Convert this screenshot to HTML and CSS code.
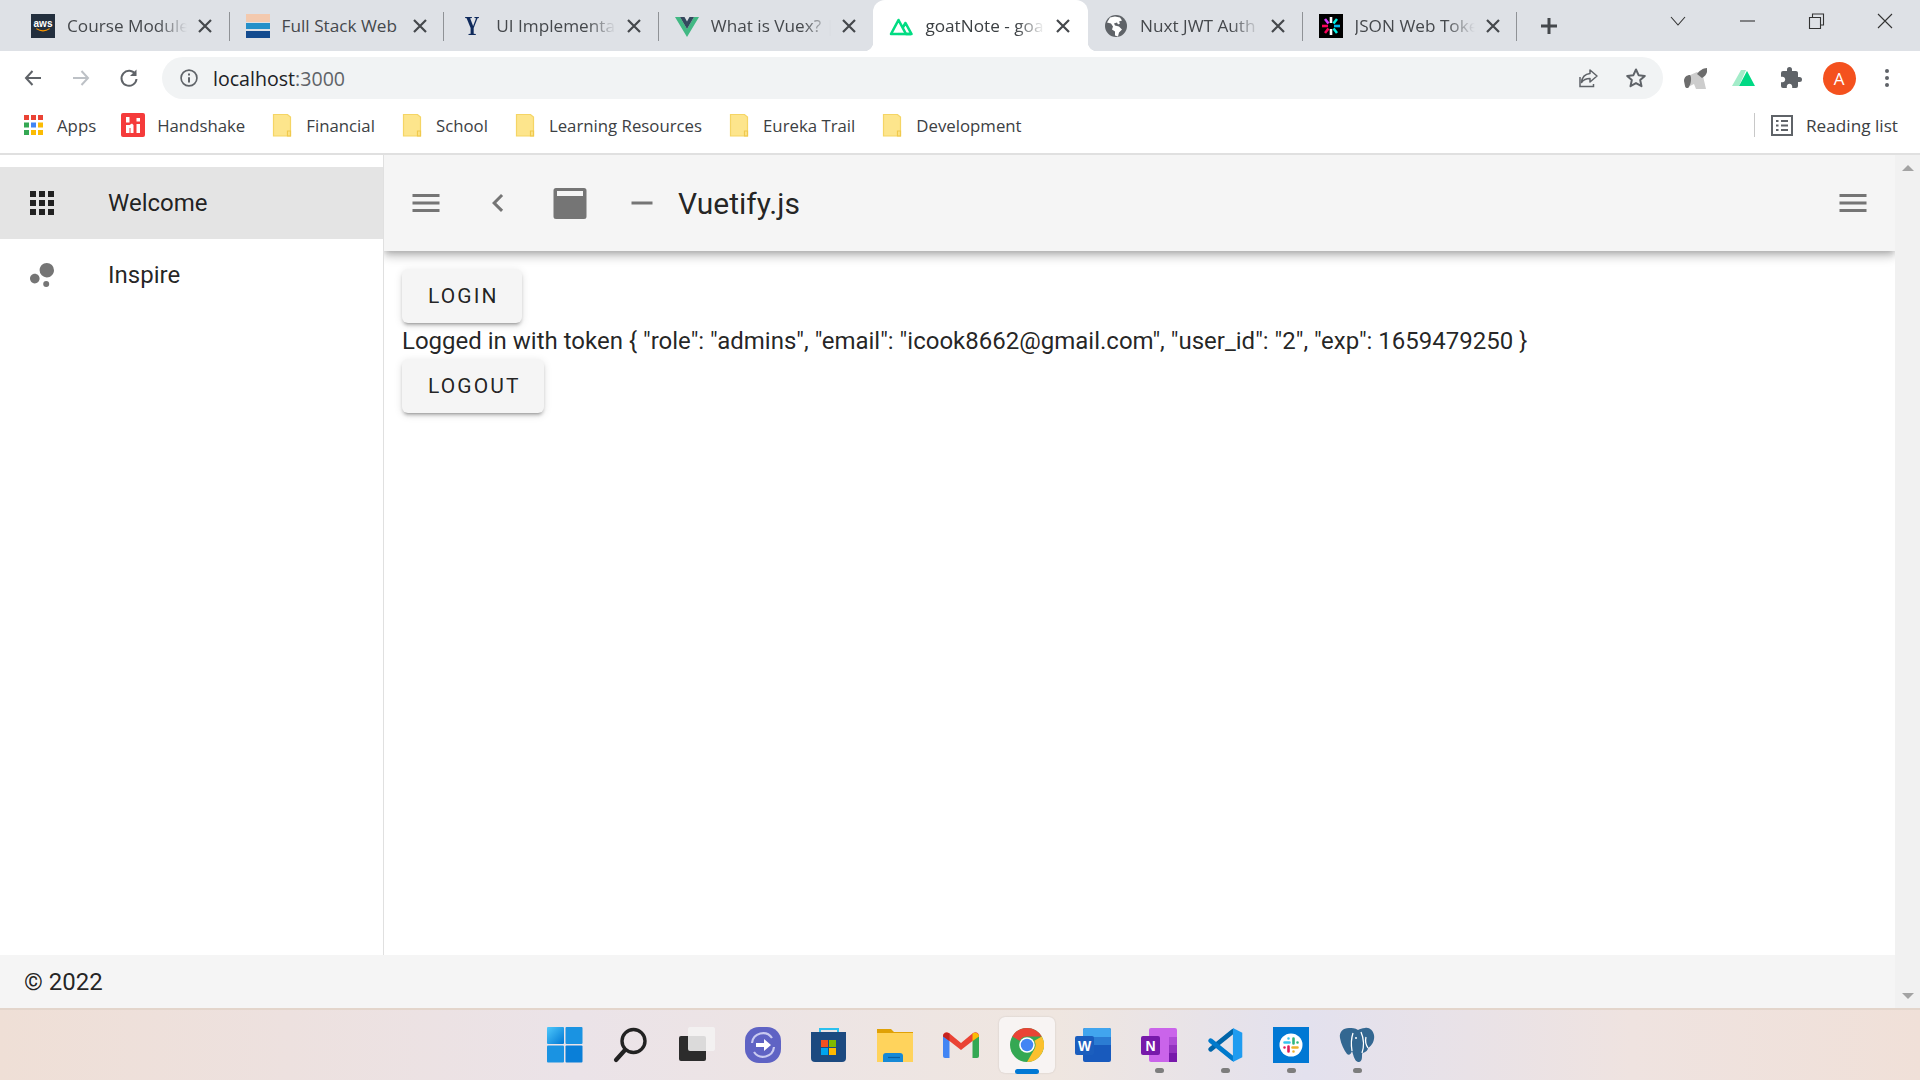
FILE: index.html
```html
<!DOCTYPE html>
<html lang="en">
<head>
  <meta charset="UTF-8">
  <title>goatNote</title>
  <link rel="stylesheet" href="styles.css">
</head>
<body>
  <!-- Tab strip -->
  <div class="tabstrip">
    <div class="tab">
      <span class="favicon favicon-aws"><span class="aws-word">aws</span><svg viewBox="0 0 24 6" width="16" height="4"><path d="M2 1c6 4 14 4 20 0" fill="none" stroke="#f90" stroke-width="1.6"/></svg></span>
      <span class="tab-title">Course Modules</span>
      <svg class="tab-close" viewBox="0 0 18 18"><path d="M3 3l12 12M15 3L3 15"/></svg>
    </div>
    <div class="tab">
      <span class="favicon favicon-stripes"><i class="stripe-a"></i><i class="stripe-b"></i><i class="stripe-c"></i></span>
      <span class="tab-title tab-title-short">Full Stack Web</span>
      <svg class="tab-close" viewBox="0 0 18 18"><path d="M3 3l12 12M15 3L3 15"/></svg>
    </div>
    <div class="tab">
      <span class="favicon favicon-yale"><span class="yale-letter">Y</span></span>
      <span class="tab-title">UI Implementation</span>
      <svg class="tab-close" viewBox="0 0 18 18"><path d="M3 3l12 12M15 3L3 15"/></svg>
    </div>
    <div class="tab tab-before-active">
      <svg class="favicon" viewBox="0 0 24 24"><path d="M0 3h5l7 12 7-12h5L12 23z" fill="#41b883"/><path d="M5 3h4.500l2.500 4.500L14.500 3H19l-7 12z" fill="#34495e"/></svg>
      <span class="tab-title">What is Vuex? | Vuex</span>
      <svg class="tab-close" viewBox="0 0 18 18"><path d="M3 3l12 12M15 3L3 15"/></svg>
    </div>
    <div class="tab tab-active">
      <svg class="favicon" viewBox="0 0 24 24"><path d="M9 20H2L9.500 6l7.500 14h5.500L16.500 9l-3 5" fill="none" stroke="#00dc82" stroke-width="2.600" stroke-linejoin="round"/><path d="M9 20h13" stroke="#00dc82" stroke-width="2.600"/></svg>
      <span class="tab-title">goatNote - goatNote</span>
      <svg class="tab-close" viewBox="0 0 18 18"><path d="M3 3l12 12M15 3L3 15"/></svg>
    </div>
    <div class="tab">
      <svg class="favicon" viewBox="0 0 24 24"><circle cx="12" cy="12" r="11" fill="#5f6368"/><path d="M11 2.500l-5 1-3 5 4 1 2 3-1 3 3 2v4l3 1 1-4 3-3-3-3-4-1-1-2 3-1 1 2 2-1-1-2 3-1-2-3z" fill="#fff"/></svg>
      <span class="tab-title">Nuxt JWT Auth</span>
      <svg class="tab-close" viewBox="0 0 18 18"><path d="M3 3l12 12M15 3L3 15"/></svg>
    </div>
    <div class="tab">
      <svg class="favicon" viewBox="0 0 24 24"><rect width="24" height="24" fill="#000"/><g stroke-width="2.600" fill="none"><path d="M12 3v6M12 15v6" stroke="#fff"/><path d="M6 5l3.500 4.500" stroke="#d63aff"/><path d="M18 5l-3.500 4.500" stroke="#00f2e6"/><path d="M3 12h6" stroke="#fb015b"/><path d="M15 12h6" stroke="#00b9f1"/><path d="M6 19l3.500-4.500" stroke="#fb015b"/><path d="M18 19l-3.500-4.500" stroke="#00f2e6"/></g></svg>
      <span class="tab-title">JSON Web Tokens</span>
      <svg class="tab-close" viewBox="0 0 18 18"><path d="M3 3l12 12M15 3L3 15"/></svg>
    </div>
    <svg class="new-tab" viewBox="0 0 24 24"><path d="M12 4v16M4 12h16"/></svg>
    <div class="window-controls">
      <svg class="window-btn tab-list" viewBox="0 0 18 18"><path d="M2 5l7 8 7-8"/></svg>
      <svg class="window-btn" viewBox="0 0 18 18"><path d="M2 9h15"/></svg>
      <svg class="window-btn" viewBox="0 0 18 18"><path d="M2.500 5.500h11v11h-11zM5.500 5V2h11v11h-3"/></svg>
      <svg class="window-btn" viewBox="0 0 18 18"><path d="M2 2l14 14M16 2L2 16"/></svg>
    </div>
  </div>

  <!-- Address bar -->
  <div class="toolbar">
    <svg class="tool-icon" viewBox="0 0 24 24"><path d="M20 12H5M11.500 5L5 12l6.500 7" fill="none" stroke="#5f6368" stroke-width="2"/></svg>
    <svg class="tool-icon" viewBox="0 0 24 24"><path d="M4 12h15M12.500 5l6.500 7-6.500 7" fill="none" stroke="#bdc1c6" stroke-width="2"/></svg>
    <svg class="tool-icon" viewBox="0 0 24 24"><path d="M18.500 8.500A7.500 7.500 0 1 0 19.500 13" fill="none" stroke="#5f6368" stroke-width="2"/><path d="M19.500 3.500v6.500H13z" fill="#5f6368"/></svg>
    <div class="omnibox">
      <svg class="omni-info" viewBox="0 0 24 24"><circle cx="12" cy="12" r="9.500" fill="none" stroke="#5f6368" stroke-width="2"/><path d="M12 11v6.500M12 6.500v2.500" stroke="#5f6368" stroke-width="2.400"/></svg>
      <span class="url">localhost<span class="url-port">:3000</span></span>
      <svg class="tool-icon omni-share" viewBox="0 0 24 24"><path d="M4 11v9.500h13.500V18" fill="none" stroke="#5f6368" stroke-width="1.500"/><path d="M14 4l7 6-7 6v-3.500c-4 0-6.500 1-8.500 4 .5-5 3.500-8.500 8.500-9z" fill="none" stroke="#5f6368" stroke-width="1.500" stroke-linejoin="round"/></svg>
      <svg class="tool-icon" viewBox="0 0 24 24"><path d="M12 3.500l2.600 5.700 6.200.7-4.600 4.200 1.300 6.100-5.500-3.100-5.500 3.100 1.300-6.100-4.600-4.200 6.200-.7z" fill="none" stroke="#5f6368" stroke-width="2" stroke-linejoin="round"/></svg>
    </div>
    <svg class="tool-icon" viewBox="0 0 24 24"><path d="M5 10l9-4 6 4 3 13H13l-2-5-4 2z" fill="#cdcdcd"/><path d="M1 15c0-4 3-6 6-6 2 2 1 9-1 12-1 2-4 1-4-1z" fill="#6d6d6d"/><path d="M14 8c2-3 6-6 10-6 1 4-1 8-5 10z" fill="#6d6d6d"/></svg>
    <svg class="tool-icon" viewBox="0 0 24 24"><path d="M1 20L10 4h5L8 20z" fill="#a3ecc9"/><path d="M8 20l8-15 8 15z" fill="#00d984"/></svg>
    <svg class="tool-icon" viewBox="0 0 24 24"><path d="M20.500 11H19V7C19 5.890 18.100 5 17 5H13V3.500A2.500 2.500 0 0 0 10.500 1A2.500 2.500 0 0 0 8 3.500V5H4A2 2 0 0 0 2 7V10.800H3.500C5 10.800 6.200 12 6.200 13.500C6.200 15 5 16.200 3.500 16.200H2V20A2 2 0 0 0 4 22H7.800V20.500C7.800 19 9 17.800 10.500 17.800C12 17.800 13.200 19 13.200 20.500V22H17A2 2 0 0 0 19 20V16H20.500A2.500 2.500 0 0 0 23 13.500A2.500 2.500 0 0 0 20.500 11Z" fill="#5f6368"/></svg>
    <div class="tool-slot"><span class="avatar">A</span></div>
    <svg class="tool-icon" viewBox="0 0 24 24"><circle cx="12" cy="5" r="2" fill="#5f6368"/><circle cx="12" cy="12" r="2" fill="#5f6368"/><circle cx="12" cy="19" r="2" fill="#5f6368"/></svg>
  </div>

  <!-- Bookmarks -->
  <div class="bookmarks">
    <div class="bookmark">
      <svg class="bookmark-icon" viewBox="0 0 24 24">
        <g fill="#ea4335"><rect x="3" y="2" width="5" height="5"/><rect x="10" y="2" width="5" height="5"/><rect x="17" y="2" width="5" height="5"/></g>
        <rect x="3" y="9.500" width="5" height="5" fill="#34a853"/><rect x="10" y="9.500" width="5" height="5" fill="#4285f4"/><rect x="17" y="9.500" width="5" height="5" fill="#fbbc04"/>
        <rect x="3" y="17" width="5" height="5" fill="#34a853"/><rect x="10" y="17" width="5" height="5" fill="#fbbc04"/><rect x="17" y="17" width="5" height="5" fill="#fbbc04"/>
      </svg>
      <span>Apps</span>
    </div>
    <div class="bookmark">
      <svg class="bookmark-icon" viewBox="0 0 24 24"><rect width="24" height="24" rx="2" fill="#f53b3b"/><path d="M5 4h3.500v5.500H5zM5 12h3.500v8H5zM8.500 12l2.500-1.500 1.500 1.500v8H9.500v-5H8.500zM15.500 11h3.500v9h-3.500zM15.500 5h3.500v3.500h-3.500z" fill="#fff"/></svg>
      <span>Handshake</span>
    </div>
    <div class="bookmark">
      <svg class="bookmark-icon" viewBox="0 0 24 24"><use href="#folder"/></svg>
      <span>Financial</span>
    </div>
    <div class="bookmark">
      <svg class="bookmark-icon" viewBox="0 0 24 24"><use href="#folder"/></svg>
      <span>School</span>
    </div>
    <div class="bookmark">
      <svg class="bookmark-icon" viewBox="0 0 24 24"><use href="#folder"/></svg>
      <span>Learning Resources</span>
    </div>
    <div class="bookmark">
      <svg class="bookmark-icon" viewBox="0 0 24 24"><use href="#folder"/></svg>
      <span>Eureka Trail</span>
    </div>
    <div class="bookmark">
      <svg class="bookmark-icon" viewBox="0 0 24 24"><use href="#folder"/></svg>
      <span>Development</span>
    </div>
    <div class="reading-list">
      <svg class="bookmark-icon" viewBox="0 0 24 24"><path d="M2 3h20v19H2z" fill="none" stroke="#5f6368" stroke-width="2"/><path d="M6 8h2.500M11 8h7M6 12.500h2.500M11 12.500h7M6 17h2.500M11 17h7" stroke="#5f6368" stroke-width="2"/></svg>
      <span>Reading list</span>
    </div>
  </div>

  <svg class="svg-defs" width="0" height="0"><symbol id="folder" viewBox="0 0 24 24"><path d="M3.500 1.500h14L20.500 4v19h-17z" fill="#fde58c" stroke="#f5d565" stroke-width="1.200"/><path d="M17.500 23v-5h3v5z" fill="none" stroke="#f0c94d" stroke-width="1.200"/></symbol></svg>

  <!-- Page -->
  <div class="viewport">
    <div class="page">
      <div class="app-body">
        <nav class="drawer">
          <div class="drawer-item drawer-item-active">
            <svg class="mdi mdi-dark" viewBox="0 0 24 24"><path d="M16 20H20V16H16M16 14H20V10H16M10 8H14V4H10M16 8H20V4H16M10 14H14V10H10M4 14H8V10H4M4 20H8V16H4M10 20H14V16H10M4 8H8V4H4V8Z"/></svg>
            <span>Welcome</span>
          </div>
          <div class="drawer-item">
            <svg class="mdi" viewBox="0 0 24 24"><path d="M7.200 11.200C8.970 11.200 10.400 12.630 10.400 14.400C10.400 16.170 8.970 17.600 7.200 17.600C5.430 17.600 4 16.170 4 14.400C4 12.630 5.430 11.200 7.200 11.200M14.800 16A2 2 0 0 1 16.800 18A2 2 0 0 1 14.800 20A2 2 0 0 1 12.800 18A2 2 0 0 1 14.800 16M15.200 4A4.800 4.800 0 0 1 20 8.800C20 11.450 17.850 13.600 15.200 13.600A4.800 4.800 0 0 1 10.400 8.800C10.400 6.150 12.550 4 15.200 4Z"/></svg>
            <span>Inspire</span>
          </div>
        </nav>
        <div class="content">
          <header class="app-bar">
            <svg class="mdi" viewBox="0 0 24 24"><path d="M3 6H21V8H3V6M3 11H21V13H3V11M3 16H21V18H3V16Z"/></svg>
            <svg class="mdi" viewBox="0 0 24 24"><path d="M15.410 16.580L10.830 12L15.410 7.410L14 6L8 12L14 18L15.410 16.580Z"/></svg>
            <svg class="mdi" viewBox="0 0 36 36"><path fill-rule="evenodd" d="M4 3h28a2.500 2.500 0 0 1 2.500 2.500v26a2.500 2.500 0 0 1-2.500 2.500H4a2.500 2.500 0 0 1-2.500-2.500v-26A2.500 2.500 0 0 1 4 3zM5 6v5h26V6z"/></svg>
            <svg class="mdi" viewBox="0 0 24 24"><path d="M19 13H5V11H19V13Z"/></svg>
            <span class="app-title">Vuetify.js</span>
            <svg class="mdi app-bar-end" viewBox="0 0 24 24"><path d="M3 6H21V8H3V6M3 11H21V13H3V11M3 16H21V18H3V16Z"/></svg>
          </header>
          <main class="main">
            <button class="btn">Login</button>
            <div class="token">Logged in with token { "role": "admins", "email": "icook8662@gmail.com", "user_id": "2", "exp": 1659479250 }</div>
            <button class="btn">Logout</button>
          </main>
        </div>
      </div>
      <footer class="footer">© 2022</footer>
    </div>
    <div class="scrollbar">
      <span class="scroll-up"></span>
      <span class="scroll-down"></span>
    </div>
  </div>

  <!-- Taskbar -->
  <div class="taskbar">
    <div class="task">
      <svg class="task-icon" viewBox="0 0 36 36"><defs><linearGradient id="win" x1="0" y1="0" x2="1" y2="1"><stop offset="0" stop-color="#4fc8fb"/><stop offset="1" stop-color="#0078d4"/></linearGradient></defs><rect x="0" y="0" width="17" height="17" rx="1" fill="url(#win)"/><rect x="18.500" y="0" width="17" height="17" rx="1" fill="#1a93e2"/><rect x="0" y="18.500" width="17" height="17" rx="1" fill="#1a93e2"/><rect x="18.500" y="18.500" width="17" height="17" rx="1" fill="#0a7fd8"/></svg>
    </div>
    <div class="task">
      <svg class="task-icon" viewBox="0 0 36 36"><circle cx="20.500" cy="14" r="11.500" fill="none" stroke="#222" stroke-width="3.400"/><path d="M12 23L3 33" stroke="#222" stroke-width="4.200" stroke-linecap="round"/></svg>
    </div>
    <div class="task">
      <svg class="task-icon" viewBox="0 0 36 36"><rect x="0" y="9" width="27" height="25" rx="2" fill="#2c2c2c"/><rect x="9" y="0" width="27" height="24" rx="2" fill="#f4f2f3" fill-opacity=".88"/></svg>
    </div>
    <div class="task">
      <svg class="task-icon" viewBox="0 0 36 36"><rect x="0" y="0" width="36" height="36" rx="14" fill="#5f63c4"/><path d="M7 16a11 11 0 0 1 20-5M29 20a11 11 0 0 1-20 5" fill="none" stroke="#c9caf0" stroke-width="2.200"/><path d="M11 16h8v-4l7 6-7 6v-4h-8z" fill="#fff"/></svg>
    </div>
    <div class="task">
      <svg class="task-icon" viewBox="0 0 36 36"><path d="M9 8V2h18v6" fill="none" stroke="#2bc0ee" stroke-width="2"/><path d="M0 5h35v26a4 4 0 0 1-4 4H4a4 4 0 0 1-4-4z" fill="#1c4a80"/><rect x="10" y="13" width="7" height="7" fill="#f25022"/><rect x="18" y="13" width="7" height="7" fill="#7fba00"/><rect x="10" y="21" width="7" height="7" fill="#00a4ef"/><rect x="18" y="21" width="7" height="7" fill="#ffb900"/></svg>
    </div>
    <div class="task">
      <svg class="task-icon" viewBox="0 0 36 36"><path d="M0 2h14l3 3h19v5H0z" fill="#e0a106"/><path d="M0 6h36v29H0z" fill="#ffd35c"/><path d="M6 35v-6a3 3 0 0 1 3-3h14a3 3 0 0 1 3 3v6z" fill="#1689d6"/><path d="M11 30.500h12" stroke="#0b5ea0" stroke-width="1.200"/></svg>
    </div>
    <div class="task">
      <svg class="task-icon" viewBox="0 0 36 26"><path d="M0 4h6.500v22H2a2 2 0 0 1-2-2z" fill="#4285f4"/><path d="M29.500 4H36v20a2 2 0 0 1-2 2h-4.500z" fill="#34a853"/><path d="M0 4c0-3 3-5 6-3l12 10L30 1c3-2 6 0 6 3l-6.500 5L18 18 6.500 9z" fill="#ea4335"/><path d="M29.500 9V1.500C32 0 36 1 36 4.500z" fill="#fbbc04"/><path d="M0 4.500C0 1 4 0 6.500 1.500V9z" fill="#c5221f"/></svg>
    </div>
    <div class="task">
      <div class="task-tile">
        <svg class="task-icon-chrome" viewBox="0 0 48 48"><circle cx="24" cy="24" r="24" fill="#34a853"/><path d="M24 0a24 24 0 0 1 20.800 12H24a12 12 0 0 0-10.400 6L3.200 12A24 24 0 0 1 24 0z" fill="#ea4335"/><path d="M44.800 12A24 24 0 0 1 24 48l10.400-18a12 12 0 0 0 0-12z" fill="#fbc02d"/><circle cx="24" cy="24" r="11" fill="#fff"/><circle cx="24" cy="24" r="8.800" fill="#4285f4"/></svg>
      </div>
      <i class="task-bar"></i>
    </div>
    <div class="task">
      <svg class="task-icon" viewBox="0 0 36 36"><rect x="8" y="1" width="28" height="34" rx="2" fill="#185abd"/><path d="M8 3a2 2 0 0 1 2-2h24a2 2 0 0 1 2 2v7H8z" fill="#41a5ee"/><rect x="8" y="10" width="28" height="8" fill="#2b7cd3"/><rect x="0" y="9" width="19" height="19" rx="2" fill="#1b5ebe"/><text class="office-letter" x="9.500" y="24">W</text></svg>
    </div>
    <div class="task">
      <svg class="task-icon" viewBox="0 0 36 36"><rect x="8" y="1" width="28" height="34" rx="2" fill="#ca64ea"/><rect x="28" y="10" width="8" height="8" fill="#ae4bd5"/><rect x="28" y="18" width="8" height="8" fill="#9332bf"/><rect x="28" y="26" width="8" height="9" fill="#7719aa"/><rect x="0" y="9" width="19" height="19" rx="2" fill="#7719aa"/><text class="office-letter" x="9.500" y="24">N</text></svg>
      <i class="task-dot"></i>
    </div>
    <div class="task">
      <svg class="task-icon" viewBox="0 0 100 100"><path d="M72 12L10 62" stroke="#0065a9" stroke-width="13" stroke-linecap="round"/><path d="M10 38l62 50" stroke="#007acc" stroke-width="13" stroke-linecap="round"/><path d="M72 3l26 13v68L72 97z" fill="#1f9cf0"/></svg>
      <i class="task-dot"></i>
    </div>
    <div class="task">
      <svg class="task-icon" viewBox="0 0 36 36"><rect width="36" height="36" fill="#0078d4"/><circle cx="18" cy="18" r="11.500" fill="#fff"/><g stroke-width="2.600" stroke-linecap="round"><path d="M11.500 15.500h5M15.500 11.500h.01" stroke="#36c5f0"/><path d="M20.500 11.500v5M24.500 15.500h.01" stroke="#2eb67d"/><path d="M19.500 20.500h5M20.500 24.500h.01" stroke="#ecb22e"/><path d="M15.500 19.500v5M11.500 20.500h.01" stroke="#e01e5a"/></g></svg>
      <i class="task-dot"></i>
    </div>
    <div class="task">
      <svg class="task-icon" viewBox="0 0 36 36"><path d="M10 1C4 1 0 5 1 11c1 6 4 12 7 16 2 2 4 0 5-3 1 2 2 10 6 11 3 0 4-2 4-6 0-2 0-3 1-3 3-1 5-3 5-5 4-2 7-8 6-13-1-5-5-8-9-7-3 0-5 1-7 2-3-2-6-2-9-2z" fill="#336791"/><path d="M13 24c-1-6-1-12 1-18M23 26c2-6 2-14-1-21M29 21c-2-3-3-7-2-11" fill="none" stroke="#fff" stroke-width="1.300"/><circle cx="17" cy="11" r="1" fill="#fff"/></svg>
      <i class="task-dot"></i>
    </div>
  </div>
</body>
</html>
```

FILE: styles.css
```css
body {
  margin: 0;
  height: 100vh;
  display: flex;
  flex-direction: column;
  overflow: hidden;
  font-family: "Open Sans", "Liberation Sans", sans-serif;
  background: #fff;
}
svg {
  flex: none;
  display: block;
}
.svg-defs {
  height: 0;
}

/* tab strip */
.tabstrip {
  height: 51px;
  flex: none;
  display: flex;
  padding-left: 15px;
  background: #dee1e6;
}
.tab {
  width: 214.6px;
  flex: none;
  display: flex;
  align-items: center;
  padding-left: 16px;
  box-sizing: border-box;
  position: relative;
}
.tab::after {
  content: '';
  width: 1px;
  height: 29px;
  margin-left: auto;
  margin-top: 2px;
  background: #8f9296;
}
.tab-active {
  background: #fff;
  border-radius: 12px 12px 0 0;
}
.tab-active::after,
.tab-before-active::after {
  background: transparent;
}
.tab-active::before {
  content: '';
  position: absolute;
  left: -9px;
  right: -9px;
  bottom: 0;
  height: 9px;
  background:
    radial-gradient(circle at 0 0, #dee1e6 9px, #fff 9.5px) left / 9px 9px no-repeat,
    radial-gradient(circle at 100% 0, #dee1e6 9px, #fff 9.5px) right / 9px 9px no-repeat;
}
.favicon {
  width: 24px;
  height: 24px;
  flex: none;
}
.favicon-aws {
  background: #232f3e;
  color: #fff;
  display: flex;
  flex-direction: column;
  align-items: center;
  justify-content: center;
}
.aws-word {
  font: bold 10px/9px "Liberation Sans", sans-serif;
}
.favicon-stripes {
  display: flex;
  flex-direction: column;
}
.favicon-stripes i {
  display: block;
}
.stripe-a {
  height: 8px;
  background: #f3c9ae;
}
.stripe-b {
  height: 6px;
  margin-top: 1px;
  background: #2590c9;
}
.stripe-c {
  height: 7px;
  margin-top: 2px;
  background: #134b8f;
}
.favicon-yale {
  font: bold 28px/24px "Liberation Serif", serif;
  color: #0f2a5c;
  text-align: center;
}
.yale-letter {
  display: inline-block;
  transform: scaleX(0.72);
}
.tab-title {
  width: 120px;
  margin-left: 12px;
  margin-right: 9px;
  flex: none;
  overflow: hidden;
  white-space: nowrap;
  font-size: 17.2px;
  color: #45484c;
  -webkit-mask-image: linear-gradient(90deg, #000 76%, transparent 100%);
  mask-image: linear-gradient(90deg, #000 76%, transparent 100%);
}
.tab-title-short {
  -webkit-mask-image: none;
  mask-image: none;
}
.tab-active .tab-title {
  color: #3c4043;
}
.tab-close {
  width: 18px;
  height: 18px;
  fill: none;
  stroke: #45484c;
  stroke-width: 2.2;
}
.new-tab {
  width: 24px;
  height: 24px;
  margin: 14px 0 0 20px;
  fill: none;
  stroke: #45484c;
  stroke-width: 3;
}
.window-controls {
  margin-left: auto;
  margin-top: 12px;
  padding-right: 26px;
  display: flex;
  gap: 51px;
  align-items: flex-start;
}
.window-btn {
  width: 18px;
  height: 18px;
  fill: none;
  stroke: #333;
  stroke-width: 1.1;
}

/* address bar */
.toolbar {
  height: 54px;
  flex: none;
  display: flex;
  align-items: center;
  padding: 0 9px;
  background: #fff;
}
.tool-icon {
  width: 24px;
  height: 24px;
  padding: 0 12px;
}
.tool-slot {
  width: 48px;
  display: flex;
  justify-content: center;
}
.avatar {
  width: 33px;
  height: 33px;
  border-radius: 50%;
  background: #f4511e;
  color: #fff;
  font-size: 17px;
  line-height: 33px;
  text-align: center;
}
.omnibox {
  flex: 1;
  height: 42px;
  margin: 0 8px 0 9px;
  padding-right: 3px;
  display: flex;
  align-items: center;
  border-radius: 21px;
  background: #f1f3f4;
}
.omni-info {
  width: 20px;
  height: 20px;
  margin-left: 17px;
}
.url {
  margin-left: 14px;
  font-size: 19.6px;
  color: #202124;
}
.url-port {
  color: #5f6368;
}
.omni-share {
  margin-left: auto;
}

/* bookmarks */
.bookmarks {
  height: 50px;
  flex: none;
  box-sizing: border-box;
  display: flex;
  align-items: center;
  gap: 25px;
  padding: 0 22px 8px 21px;
  font-size: 16.8px;
  color: #3c4043;
  background: #fff;
  border-bottom: 2px solid #e0e0e0;
}
.bookmark {
  display: flex;
  align-items: center;
  gap: 12px;
  white-space: nowrap;
}
.bookmark-icon {
  width: 24px;
  height: 24px;
}
.reading-list {
  margin-left: auto;
  height: 24px;
  padding-left: 15px;
  display: flex;
  align-items: center;
  gap: 12px;
  border-left: 1px solid #c8c8c8;
  font-size: 17.2px;
  white-space: nowrap;
}

/* page */
.viewport {
  flex: 1;
  min-height: 0;
  display: flex;
  font-family: Roboto, sans-serif;
  color: rgba(0, 0, 0, 0.87);
}
.page {
  flex: 1;
  min-width: 0;
  display: flex;
  flex-direction: column;
}
.app-body {
  flex: 1;
  min-height: 0;
  display: flex;
}
.drawer {
  width: 384px;
  flex: none;
  box-sizing: border-box;
  padding-top: 12px;
  border-right: 1px solid #e0e0e0;
  background: #fff;
}
.drawer-item {
  height: 72px;
  padding-left: 24px;
  display: flex;
  align-items: center;
  gap: 48px;
  font-size: 24px;
}
.drawer-item-active {
  background: #e4e4e4;
}
.mdi {
  width: 36px;
  height: 36px;
  fill: #757575;
}
.mdi-dark {
  fill: #212121;
}
.content {
  flex: 1;
  min-width: 0;
  display: flex;
  flex-direction: column;
  overflow: hidden;
}
.app-bar {
  height: 96px;
  flex: none;
  display: flex;
  align-items: center;
  gap: 36px;
  padding: 0 24px;
  background: #f5f5f5;
  box-shadow: 0 3px 6px -2px rgba(0, 0, 0, 0.2), 0 6px 8px 0 rgba(0, 0, 0, 0.14), 0 2px 15px 0 rgba(0, 0, 0, 0.12);
  position: relative;
}
.app-title {
  margin-left: -18px;
  font-size: 30px;
}
.app-bar-end {
  margin-left: auto;
}
.main {
  flex: 1;
  padding: 18px;
  display: flex;
  flex-direction: column;
  align-items: flex-start;
}
.btn {
  height: 54px;
  padding: 0 23px 0 26px;
  border: 0;
  border-radius: 6px;
  background: #f5f5f5;
  color: rgba(0, 0, 0, 0.87);
  font: 400 21px Roboto, sans-serif;
  letter-spacing: 2.1px;
  text-transform: uppercase;
  box-shadow: 0 4px 2px -3px rgba(0, 0, 0, 0.2), 0 3px 3px 0 rgba(0, 0, 0, 0.14), 0 2px 8px 0 rgba(0, 0, 0, 0.12);
}
.token {
  font-size: 24px;
  line-height: 36px;
}
.footer {
  height: 53px;
  flex: none;
  padding-left: 24px;
  display: flex;
  align-items: center;
  font-size: 24px;
  background: #f5f5f5;
}
.scrollbar {
  width: 25px;
  flex: none;
  padding: 10px 0 9px;
  box-sizing: border-box;
  display: flex;
  flex-direction: column;
  align-items: center;
  justify-content: space-between;
  background: #f1f1f1;
}
.scroll-up {
  border: 6px solid transparent;
  border-top: 0;
  border-bottom: 6px solid #a3a3a3;
}
.scroll-down {
  border: 6px solid transparent;
  border-bottom: 0;
  border-top: 6px solid #a3a3a3;
}

/* taskbar */
.taskbar {
  height: 72px;
  flex: none;
  box-sizing: border-box;
  display: flex;
  justify-content: center;
  padding-left: 2px;
  border-top: 2px solid #e3d5cb;
  background: linear-gradient(90deg, #efdfd6 0%, #ebe3e8 30%, #efe6e0 55%, #e3e1ee 68%, #efe3e0 85%, #f0e0d8 100%);
}
.task {
  width: 66px;
  flex: none;
  display: flex;
  align-items: center;
  justify-content: center;
  position: relative;
}
.task-icon {
  width: 36px;
  height: 36px;
}
.task-tile {
  width: 56px;
  height: 56px;
  border-radius: 6px;
  background: #f8f4f3;
  box-shadow: 0 0 2px rgba(0, 0, 0, 0.15);
  display: flex;
  align-items: center;
  justify-content: center;
}
.task-icon-chrome {
  width: 34px;
  height: 34px;
}
.task-bar {
  position: absolute;
  bottom: 6px;
  left: 21px;
  width: 24px;
  height: 5px;
  border-radius: 3px;
  background: #0078d4;
}
.task-dot {
  position: absolute;
  bottom: 7px;
  left: 29px;
  width: 9px;
  height: 5px;
  border-radius: 3px;
  background: #7d7d7d;
}
.office-letter {
  font: bold 14px "Liberation Sans", sans-serif;
  fill: #fff;
  text-anchor: middle;
}
```
